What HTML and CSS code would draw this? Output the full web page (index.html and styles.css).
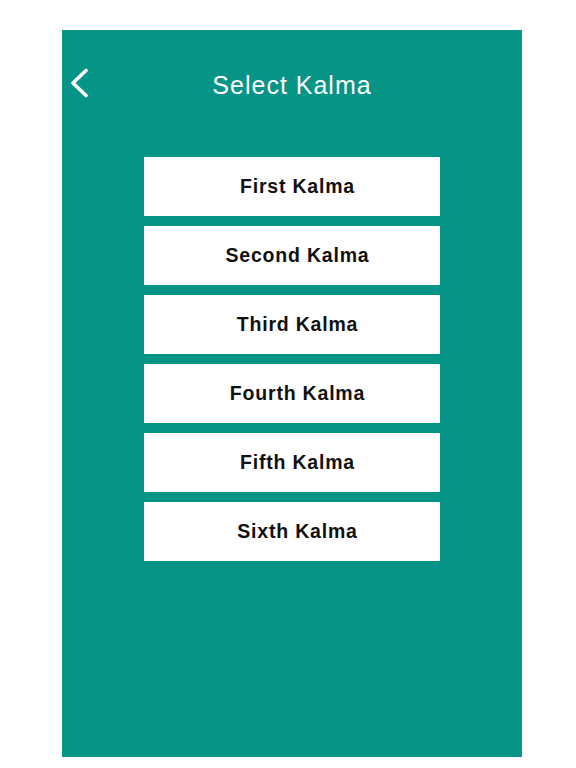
FILE: index.html
```html
<!DOCTYPE html>
<html lang="en">
<head>
    <meta charset="UTF-8">
    <meta name="viewport" content="width=device-width, initial-scale=1.0">
    <title>Select Kalma</title>
    <link rel="stylesheet" href="styles.css">
</head>
<body>
    <div class="screen">
        <div class="top-bar">
            <a class="back-btn" href="#" aria-label="Back">
                <svg width="20" height="30" viewBox="0 0 20 30">
                    <path d="M17 2.5 L4 15 L17 27.5" fill="none" stroke="#fff" stroke-width="3.6" stroke-linecap="round" stroke-linejoin="round"/>
                </svg>
            </a>
            <h1 class="title">Select Kalma</h1>
            <span></span>
        </div>

        <!-- kalma list -->
        <ul class="kalma-list">
            <li class="kalma-item">First Kalma</li>
            <li class="kalma-item">Second Kalma</li>
            <li class="kalma-item">Third Kalma</li>
            <li class="kalma-item">Fourth Kalma</li>
            <li class="kalma-item">Fifth Kalma</li>
            <li class="kalma-item">Sixth Kalma</li>
        </ul>
    </div>
</body>
</html>
```

FILE: styles.css
```css
body {
    margin: 0;
    background: #ffffff;
    font-family: 'Liberation Sans', Arial, sans-serif;
}

.screen {
    width: 460px;
    height: 727px;
    margin: 30px 0 0 62px;
    background: #069486;
    box-sizing: border-box;
}

.top-bar {
    display: grid;
    grid-template-columns: 1fr auto 1fr;
    align-items: center;
    height: 106px;
    padding-left: 7px;
    padding-right: 7px;
}

.back-btn {
    display: flex;
    width: 20px;
    height: 30px;
}

.title {
    margin: 0;
    color: #ffffff;
    font-size: 25px;
    font-weight: normal;
    letter-spacing: 1px;
    padding-top: 5px;
}

.kalma-list {
    list-style: none;
    margin: 21px 0 0 82px;
    padding: 0;
    width: 296px;
    display: flex;
    flex-direction: column;
    gap: 10px;
}

.kalma-item {
    height: 59px;
    background: #ffffff;
    display: flex;
    align-items: center;
    justify-content: center;
    padding-left: 11px;
    color: #111111;
    font-size: 19.5px;
    font-weight: bold;
    letter-spacing: 0.8px;
}
```
